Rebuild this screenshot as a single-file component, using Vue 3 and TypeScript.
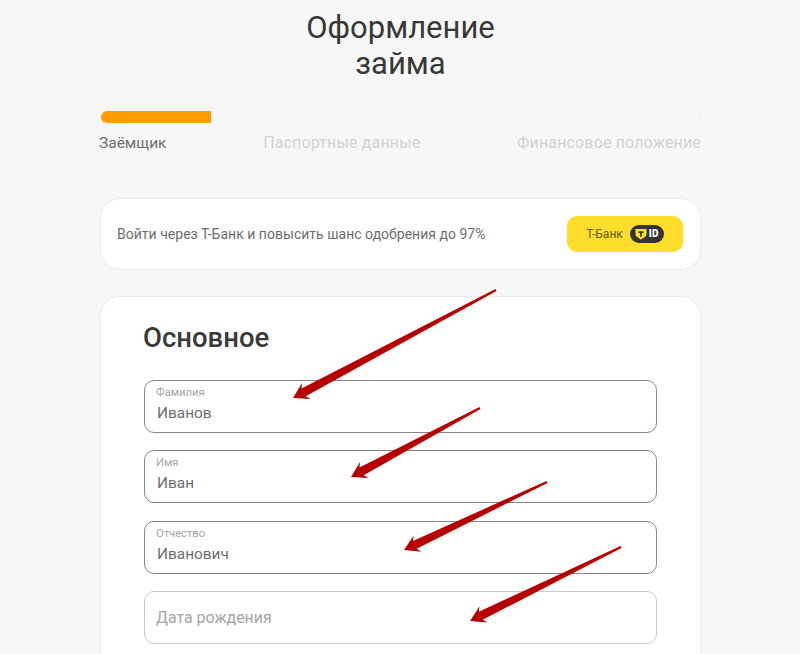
<script setup lang="ts">
interface Field { label: string; value: string }
const fields: Field[] = [
  { label: 'Фамилия', value: 'Иванов' },
  { label: 'Имя', value: 'Иван' },
  { label: 'Отчество', value: 'Иванович' },
  { label: 'Дата рождения', value: '' },
]
const steps = ['Заёмщик', 'Паспортные данные', 'Финансовое положение']

function arrow(x1: number, y1: number, x2: number, y2: number): string {
  const dx = x2 - x1
  const dy = y2 - y1
  const len = Math.hypot(dx, dy)
  const ux = dx / len
  const uy = dy / len
  const nx = -uy
  const ny = ux
  const at = (along: number, side: number) =>
    `${(x1 + ux * along + nx * side).toFixed(1)},${(y1 + uy * along + ny * side).toFixed(1)}`
  const neck = len - 15
  return [
    at(0, -1.1), at(neck + 3, -4.4), at(neck, -9), at(len, 0),
    at(neck, 9), at(neck + 3, 4.4), at(0, 1.1),
  ].join(' ')
}
const arrows = [
  arrow(496, 290, 293, 398),
  arrow(480, 408, 351, 477),
  arrow(547, 482, 404, 550),
  arrow(621, 547, 470, 621),
]
</script>

<template>
  <div class="page">
    <div class="wrap">
      <h1 class="title">Оформление<br />займа</h1>
      <div class="track"><div class="fill"></div></div>
      <div class="steps">
        <span v-for="(s, i) in steps" :key="s" class="step" :class="{ active: i === 0 }">{{ s }}</span>
      </div>
      <div class="card promo">
        <span class="promo-text">Войти через Т-Банк и повысить шанс одобрения до 97%</span>
        <button class="tbtn" type="button">
          <span>Т-Банк</span>
          <span class="badge">
            <svg width="12" height="12" viewBox="0 0 13 13">
              <path d="M0.500 1h12v5.800c0 2.700-3.600 4.100-6 5.700C4.100 10.900 0.500 9.500 0.500 6.800z" fill="#ffdd2d" />
              <path d="M3.800 3.600h5.400v1.700H7.400V9.400H5.600V5.300H3.800z" fill="#333" />
            </svg>
            <span class="id">ID</span>
          </span>
        </button>
      </div>
      <div class="card form">
        <h2 class="heading">Основное</h2>
        <div class="fields">
          <div v-for="f in fields" :key="f.label" class="field" :class="{ empty: !f.value }">
            <template v-if="f.value">
              <span class="flabel">{{ f.label }}</span>
              <span class="fvalue">{{ f.value }}</span>
            </template>
            <span v-else class="placeholder">{{ f.label }}</span>
          </div>
        </div>
      </div>
    </div>
    <svg class="arrows" width="800" height="654" viewBox="0 0 800 654">
      <polygon v-for="(p, i) in arrows" :key="i" :points="p" fill="#b70000" />
    </svg>
  </div>
</template>

<style>
html, body { margin: 0; overflow: hidden; background: #f7f7f7; }
</style>

<style scoped>
.page {
  position: relative;
  height: 654px;
  overflow: hidden;
  background: #f7f7f7;
  font-family: Roboto, "Liberation Sans", sans-serif;
  color: #333;
}
.wrap {
  width: 601px;
  margin-left: 100px;
  padding-top: 10px;
}
.title {
  margin: 0;
  text-align: center;
  font-size: 31px;
  line-height: 36px;
  font-weight: 400;
  color: #383838;
}
.track {
  margin-top: 26px;
  height: 17px;
  box-sizing: border-box;
  border: 1px solid #f1f1f1;
  border-radius: 8.5px;
  padding-top: 1.5px;
}
.fill {
  width: 110px;
  height: 12px;
  background: #ff9c00;
  border-radius: 6px 0 0 6px;
}
.steps {
  display: flex;
  justify-content: space-between;
  align-items: center;
  margin-top: 8px;
  margin-left: -1px;
  line-height: 20px;
  font-size: 16px;
  letter-spacing: 0.15px;
}
.step { color: #d2d2d2; }
.step.active {
  color: #6e6e6e;
  font-size: 15.5px;
  letter-spacing: 0;
}
.card {
  background: #fff;
  border: 1px solid #ececec;
  border-radius: 20px;
  box-sizing: border-box;
}
.promo {
  margin-top: 45px;
  height: 72px;
  display: flex;
  align-items: center;
  justify-content: space-between;
  padding: 0 17px 0 16px;
}
.promo-text {
  font-size: 14px;
  letter-spacing: 0.02px;
  color: #6e6e6e;
}
.tbtn {
  width: 116px;
  height: 36px;
  border: 0;
  border-radius: 10px;
  background: #ffdd2d;
  display: flex;
  align-items: center;
  justify-content: center;
  gap: 7px;
  font-family: inherit;
  font-size: 12px;
  color: #665a10;
  padding: 0;
}
.badge {
  width: 34px;
  height: 18px;
  background: #333;
  border-radius: 9px;
  display: flex;
  align-items: center;
  justify-content: center;
  gap: 2px;
}
.id {
  font-size: 10px;
  font-weight: 900;
  letter-spacing: 0.3px;
  color: #fff;
  line-height: 1;
}
.form {
  margin-top: 26px;
  height: 500px;
  padding: 24px 43px 0;
}
.heading {
  margin: 0 0 0 -1px;
  font-size: 27.5px;
  line-height: 34px;
  font-weight: 500;
  color: #3a3a3a;
}
.fields {
  margin-top: 24.8px;
  display: flex;
  flex-direction: column;
  gap: 17.5px;
}
.field {
  height: 53px;
  box-sizing: border-box;
  border: 1.3px solid #868686;
  border-radius: 10px;
  padding: 5px 11px 0;
  display: flex;
  flex-direction: column;
}
.field.empty {
  border-color: #c8c8c8;
  justify-content: center;
  padding: 0 11px;
}
.flabel {
  font-size: 11.2px;
  line-height: 14px;
  color: #a5a5a5;
}
.fvalue {
  font-size: 15.4px;
  line-height: 20px;
  margin-top: 3px;
  margin-left: 1px;
  color: #6e6e6e;
}
.placeholder {
  font-size: 15.9px;
  margin-top: -1px;
  color: #a5a5a5;
}
.arrows {
  position: absolute;
  left: 0;
  top: 0;
  pointer-events: none;
}
</style>
